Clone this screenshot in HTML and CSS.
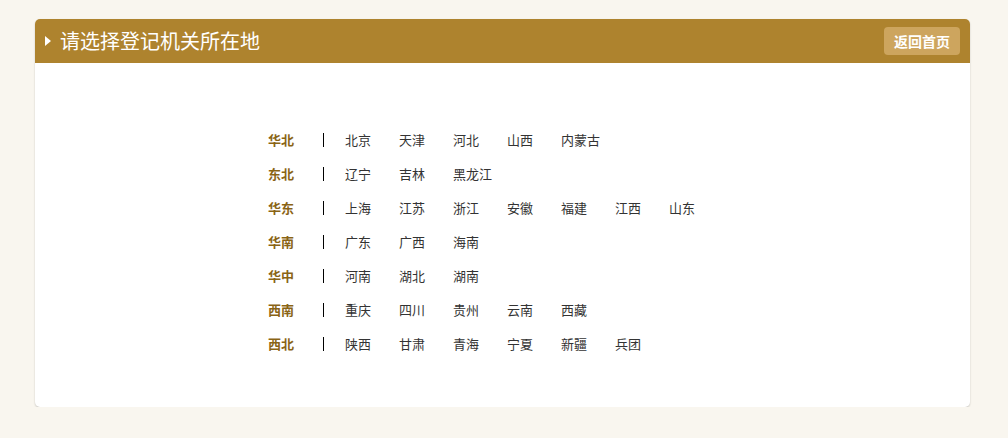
FILE: index.html
```html
<!DOCTYPE html>
<html>
<head>
  <meta charset="UTF-8">
  <title>请选择登记机关所在地</title>
  <link rel="stylesheet" href="styles.css">
</head>
<body>
<div class="panel">
  <div class="panel-head">
    <span class="arrow"></span>
    <h2 class="title">请选择登记机关所在地</h2>
    <a class="btn-home" href="#">返回首页</a>
  </div>
  <div class="panel-body">
    <div class="region">
      <span class="area">华北</span><span class="sep"></span>
      <a href="#">北京</a><a href="#">天津</a><a href="#">河北</a><a href="#">山西</a><a href="#">内蒙古</a>
    </div>
    <div class="region">
      <span class="area">东北</span><span class="sep"></span>
      <a href="#">辽宁</a><a href="#">吉林</a><a href="#">黑龙江</a>
    </div>
    <div class="region">
      <span class="area">华东</span><span class="sep"></span>
      <a href="#">上海</a><a href="#">江苏</a><a href="#">浙江</a><a href="#">安徽</a><a href="#">福建</a><a href="#">江西</a><a href="#">山东</a>
    </div>
    <div class="region">
      <span class="area">华南</span><span class="sep"></span>
      <a href="#">广东</a><a href="#">广西</a><a href="#">海南</a>
    </div>
    <div class="region">
      <span class="area">华中</span><span class="sep"></span>
      <a href="#">河南</a><a href="#">湖北</a><a href="#">湖南</a>
    </div>
    <div class="region">
      <span class="area">西南</span><span class="sep"></span>
      <a href="#">重庆</a><a href="#">四川</a><a href="#">贵州</a><a href="#">云南</a><a href="#">西藏</a>
    </div>
    <div class="region">
      <span class="area">西北</span><span class="sep"></span>
      <a href="#">陕西</a><a href="#">甘肃</a><a href="#">青海</a><a href="#">宁夏</a><a href="#">新疆</a><a href="#">兵团</a>
    </div>
  </div>
</div>
</body>
</html>
```

FILE: styles.css
```css
body {
  margin: 0;
  padding: 19px 38px 0 35px;
  background-color: #f9f6ef;
  font-family: "Microsoft YaHei", "Noto Sans CJK SC", sans-serif;
  font-size: 13px;
  color: #333333;
}

.panel {
  background-color: #ffffff;
  border-radius: 5px;
  box-shadow: 0 1px 2px rgba(0, 0, 0, 0.2);
}

.panel-head {
  height: 44px;
  padding: 0 10px 0 10px;
  background-color: #ae832e;
  border-radius: 5px 5px 0 0;
  display: flex;
  align-items: center;
}

.arrow {
  width: 0;
  height: 0;
  border-top: 5px solid transparent;
  border-bottom: 5px solid transparent;
  border-left: 6px solid #ffffff;
  margin-right: 9px;
}

.title {
  margin: 0;
  flex: 1;
  font-size: 20px;
  font-weight: normal;
  color: #ffffff;
  line-height: 44px;
}

.btn-home {
  display: block;
  height: 28px;
  line-height: 28px;
  padding: 0 10px;
  background-color: #cda55e;
  border-radius: 4px;
  color: #ffffff;
  font-size: 14px;
  font-weight: bold;
  text-decoration: none;
}

.panel-body {
  padding: 60px 0 46px 233px;
}

.region {
  height: 34px;
  line-height: 34px;
  display: flex;
  align-items: center;
}

.area {
  width: 26px;
  font-weight: bold;
  color: #8a6415;
}

.sep {
  width: 1px;
  height: 14px;
  margin: 0 21px 0 29px;
  background-color: #000000;
}

.region a {
  width: 54px;
  color: #333333;
  text-decoration: none;
  white-space: nowrap;
}

.region a:hover {
  color: #ae832e;
}
```
